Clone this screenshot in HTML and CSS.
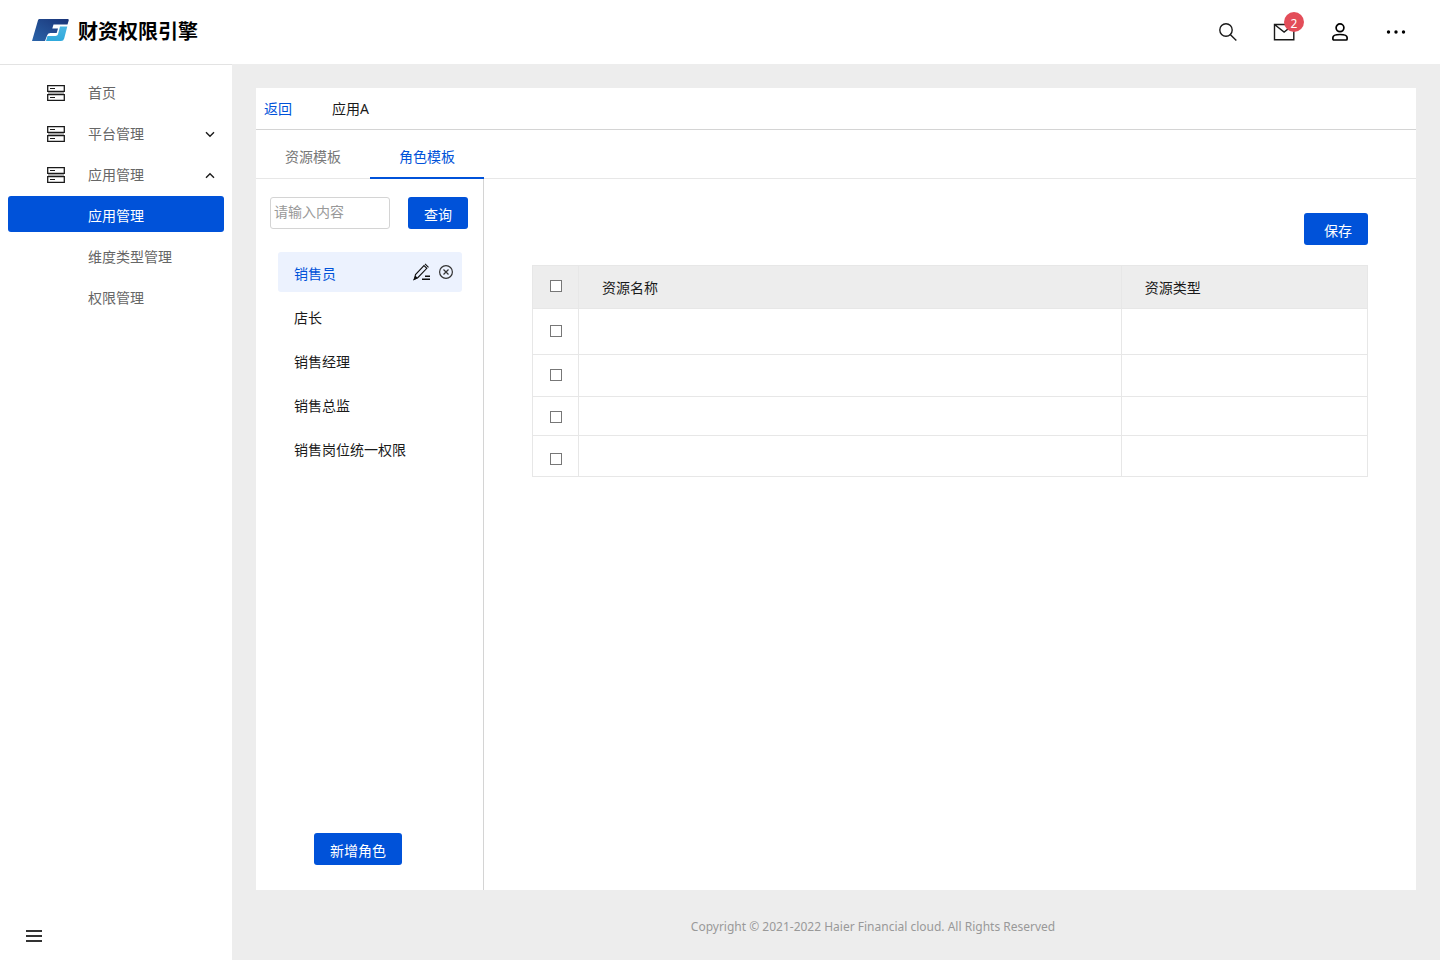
FILE: index.html
```html
<!DOCTYPE html>
<html lang="zh-CN">
<head>
<meta charset="utf-8">
<title>财资权限引擎</title>
<link rel="stylesheet" href="styles.css">
</head>
<body>
<svg class="sprite" aria-hidden="true">
  <defs>
    <symbol id="server" viewBox="0 0 18 16">
      <path fill="#aaa" d="M1 7h16v2H1z"/>
      <path fill="none" stroke="#1a1a1a" stroke-width="1.3" d="M.7.7h16.6v5.6H.7zM.7 9.7h16.6v5.6H.7z"/>
      <path stroke="#1a1a1a" d="M3 3.5h5M3 12.5h5"/>
    </symbol>
  </defs>
</svg>
<header class="header">
  <div class="brand">
    <svg class="logo" viewBox="0 0 38 22" aria-hidden="true">
      <defs>
        <linearGradient id="navy" x1="0" y1="1" x2="1" y2="0"><stop offset="0" stop-color="#2a63a8"/><stop offset="1" stop-color="#1a3478"/></linearGradient>
        <linearGradient id="sky" x1="0" y1="0" x2="0" y2="1"><stop offset="0" stop-color="#4ab5e2"/><stop offset="1" stop-color="#2fa9dc"/></linearGradient>
      </defs>
      <path fill="url(#navy)" d="M7.500 0h28c1 0 1.500.6 1.200 1.500L35.500 5.500H21.500l-1.200 4h5.700l-1.300 4.500h-6.200q-2.500 0-3.200 2L13 22H0L6 1.200Q6.400 0 7.500 0z"/>
      <path fill="url(#sky)" d="M28 7.500h7.300L32.200 19.500Q31.500 22 29 22H14l1.500-5H23.500q2 0 2.500-1.800z"/>
    </svg>
    <h1 class="title">财资权限引擎</h1>
  </div>
  <nav class="tools">
    <button class="tool" aria-label="搜索">
      <svg width="18" height="18" viewBox="0 0 18 18" fill="none" stroke="#1a1a1a" stroke-width="1.4"><circle cx="7" cy="7" r="6.200"/><path d="M11 11.200l6.300 6.300"/></svg>
    </button>
    <button class="tool" aria-label="消息">
      <svg width="22" height="18" viewBox="0 0 22 18" fill="none" stroke="#1a1a1a" stroke-width="1.4"><path d="M1.500 1.500h19.300v15.300H1.500zM1.500 1.500l9.600 7.500 9.700-7.500"/></svg>
      <span class="badge">2</span>
    </button>
    <button class="tool" aria-label="用户">
      <svg width="16" height="18" viewBox="0 0 16 18" fill="none" stroke="#000" stroke-width="1.7"><circle cx="8" cy="4.800" r="3.900"/><path d="M.9 14.500q0-3 7.100-3t7.100 3v1.500q0 1-1 1H1.900q-1 0-1-1z"/></svg>
    </button>
    <button class="tool" aria-label="更多">
      <svg width="20" height="4" viewBox="0 0 20 4"><circle cx="2.500" cy="2" r="1.700"/><circle cx="10" cy="2" r="1.700"/><circle cx="17.500" cy="2" r="1.700"/></svg>
    </button>
  </nav>
</header>
<div class="body">
  <aside class="sidebar">
    <nav class="menu">
      <a class="item" href="#"><svg class="item-icon"><use href="#server"/></svg><span class="item-text">首页</span></a>
      <a class="item" href="#"><svg class="item-icon"><use href="#server"/></svg><span class="item-text">平台管理</span><svg class="arrow" viewBox="0 0 12 7"><path d="M2 1.300l4 4 4-4"/></svg></a>
      <a class="item" href="#"><svg class="item-icon"><use href="#server"/></svg><span class="item-text">应用管理</span><svg class="arrow" viewBox="0 0 12 7"><path d="M2 5.700l4-4 4 4"/></svg></a>
      <a class="item sub active" href="#">应用管理</a>
      <a class="item sub" href="#">维度类型管理</a>
      <a class="item sub" href="#">权限管理</a>
    </nav>
    <button class="collapse" aria-label="收起菜单">
      <svg width="16" height="12" viewBox="0 0 16 12" fill="#333"><path d="M0 0h16v2H0zM0 5h16v2H0zM0 10h16v2H0z"/></svg>
    </button>
  </aside>
  <div class="page">
    <main class="card">
      <div class="crumbs"><a class="back" href="#">返回</a><span>应用A</span></div>
      <div class="tabs" role="tablist">
        <button class="tab" role="tab">资源模板</button>
        <button class="tab selected" role="tab" aria-selected="true">角色模板</button>
      </div>
      <div class="content">
        <section class="roles">
          <form class="search">
            <input class="field" type="text" placeholder="请输入内容" aria-label="角色名称">
            <button class="btn" type="button">查询</button>
          </form>
          <ul class="list">
            <li class="role current"><span>销售员</span>
              <span class="actions">
                <button class="action" aria-label="编辑"><svg width="18" height="18" viewBox="0 0 18 18" fill="none" stroke="#111" stroke-width="1.100"><path d="M1.500 16l1-4.500L11 2.500l2.800 2.800L5 14.500zM12 .8l3.500 3.500"/><path d="M1 16.500l3-1.500-1.500-1.500z" fill="#111"/><path stroke-width="1.500" d="M12 13.200h5M9 16.200h8"/></svg></button>
                <button class="action" aria-label="删除"><svg width="14" height="14" viewBox="0 0 14 14" fill="none" stroke="#333" stroke-width="1.200"><circle cx="7" cy="7" r="6.400"/><path d="M4.500 4.500l5 5M9.500 4.500l-5 5"/></svg></button>
              </span>
            </li>
            <li class="role">店长</li>
            <li class="role">销售经理</li>
            <li class="role">销售总监</li>
            <li class="role">销售岗位统一权限</li>
          </ul>
          <button class="btn add">新增角色</button>
        </section>
        <section class="resources">
          <button class="btn save">保存</button>
          <table class="table">
            <colgroup><col class="col-check"><col class="col-name"><col></colgroup>
            <thead>
              <tr class="row-head"><th class="check"><input class="box" type="checkbox" aria-label="全选"></th><th>资源名称</th><th>资源类型</th></tr>
            </thead>
            <tbody>
              <tr class="row-tall"><td class="check"><input class="box" type="checkbox" aria-label="选择第1行"></td><td></td><td></td></tr>
              <tr class="row-mid"><td class="check"><input class="box" type="checkbox" aria-label="选择第2行"></td><td></td><td></td></tr>
              <tr class="row-short"><td class="check"><input class="box" type="checkbox" aria-label="选择第3行"></td><td></td><td></td></tr>
              <tr class="row-last"><td class="check"><input class="box" type="checkbox" aria-label="选择第4行"></td><td></td><td></td></tr>
            </tbody>
          </table>
        </section>
      </div>
    </main>
    <footer class="footer">Copyright © 2021-2022 Haier Financial cloud. All Rights Reserved</footer>
  </div>
</div>
</body>
</html>
```
FILE: styles.css
```css
* { box-sizing: border-box; }
body {
  margin: 0;
  min-height: 100vh;
  display: flex;
  flex-direction: column;
  font: 14px/20px "Noto Sans", "Noto Sans CJK SC", sans-serif;
  color: #1a1a1a;
  background: #ededed;
}
button, input { font: inherit; color: inherit; }
button { border: 0; padding: 0; background: none; cursor: pointer; }
a { color: inherit; text-decoration: none; }
svg { display: block; }
.sprite { position: absolute; width: 0; height: 0; }

.header {
  display: flex;
  justify-content: space-between;
  align-items: center;
  height: 64px;
  padding: 0 32px;
  background: #fff;
}
.brand { display: flex; align-items: center; gap: 8px; }
.logo { width: 38px; height: 22px; margin-bottom: 4px; }
.title { margin: 0; font-size: 20px; line-height: 28px; font-weight: 700; color: #000; }
.tools { display: flex; gap: 32px; }
.tool {
  position: relative;
  display: flex;
  align-items: center;
  justify-content: center;
  width: 24px;
  height: 24px;
}
.badge {
  position: absolute;
  top: -8px;
  right: -8px;
  width: 20px;
  height: 20px;
  padding-top: 2px;
  border-radius: 50%;
  background: #e34d59;
  color: #fff;
  font-size: 12px;
  text-align: center;
}

.body { flex: 1; display: flex; }
.sidebar {
  width: 232px;
  flex: none;
  display: flex;
  flex-direction: column;
  justify-content: space-between;
  align-items: flex-start;
  border-top: 1px solid #e3e3e3;
  background: #fff;
}
.menu {
  width: 100%;
  display: flex;
  flex-direction: column;
  gap: 5px;
  padding: 8px;
}
.item {
  display: flex;
  align-items: center;
  height: 36px;
  padding: 4px 8px 0 38px;
  border-radius: 3px;
  color: #666;
}
.item-icon { width: 20px; height: 16px; margin-right: 22px; }
.item-text { flex: 1; }
.arrow { width: 12px; height: 7px; fill: none; stroke: #1a1a1a; stroke-width: 1.4; }
.sub { padding-left: 80px; }
.active { background: #0052d9; color: #fff; }
.collapse { padding: 18px 26px; }

.page {
  flex: 1;
  min-width: 0;
  display: flex;
  flex-direction: column;
  padding: 24px 24px 0;
}
.card { flex: 1; display: flex; flex-direction: column; background: #fff; }
.crumbs {
  display: flex;
  gap: 40px;
  padding: 11px 8px 10px;
  border-bottom: 1px solid #d4d4d4;
}
.back { color: #0052d9; }
.tabs { display: flex; border-bottom: 1px solid #e7e7e7; }
.tab {
  width: 114px;
  height: 49px;
  padding-top: 6px;
  margin-bottom: -1px;
  border-bottom: 2px solid transparent;
  color: #777;
}
.selected { border-color: #0052d9; color: #0052d9; }
.content { flex: 1; display: flex; }
.roles {
  width: 228px;
  flex: none;
  display: flex;
  flex-direction: column;
  padding: 18px 14px 25px;
  border-right: 1px solid #d4d4d4;
}
.search { display: flex; gap: 18px; }
.field {
  width: 120px;
  height: 32px;
  padding: 0 3px 3px;
  border: 1px solid #d4d4d4;
  border-radius: 3px;
}
.field::placeholder { color: #999; }
.btn {
  height: 32px;
  padding: 4px 16px 0;
  border-radius: 3px;
  background: #0052d9;
  color: #fff;
}
.list {
  display: flex;
  flex-direction: column;
  gap: 4px;
  margin: 23px 7px 0 8px;
  padding: 0;
  list-style: none;
}
.role {
  display: flex;
  justify-content: space-between;
  height: 40px;
  padding: 12px 9px 0 16px;
  border-radius: 3px;
}
.current { background: #ecf2fe; color: #0052d9; }
.actions { display: flex; align-items: center; gap: 8px; height: 16px; }
.add { align-self: flex-start; margin: auto 0 0 44px; }
.resources {
  flex: 1;
  display: flex;
  flex-direction: column;
  padding: 34px 48px;
}
.save { align-self: flex-end; padding-left: 20px; }
.table {
  width: 100%;
  margin-top: 20px;
  border-collapse: collapse;
  table-layout: fixed;
}
.col-check { width: 46px; }
.col-name { width: 65%; }
.table th, .table td {
  padding: 2px 23px 0;
  border: 1px solid #e7e7e7;
  font-weight: 400;
  text-align: left;
}
.table .check { padding: 0 0 2px; }
.table .row-short .check { padding: 2px 0 0; }
.table .row-last .check { padding: 6px 0 0; }
.row-head { height: 43px; background: #ededed; }
.row-tall { height: 46px; }
.row-mid { height: 42px; }
.row-short { height: 39px; }
.row-last { height: 41px; }
.box {
  appearance: none;
  display: block;
  width: 12px;
  height: 12px;
  margin: 0 auto;
  border: 1px solid #777;
  background: #fff;
}
.box:checked { background: #0052d9; }
.footer {
  padding: 27px 0 23px 74px;
  color: #999;
  font-size: 12px;
  text-align: center;
}
```
